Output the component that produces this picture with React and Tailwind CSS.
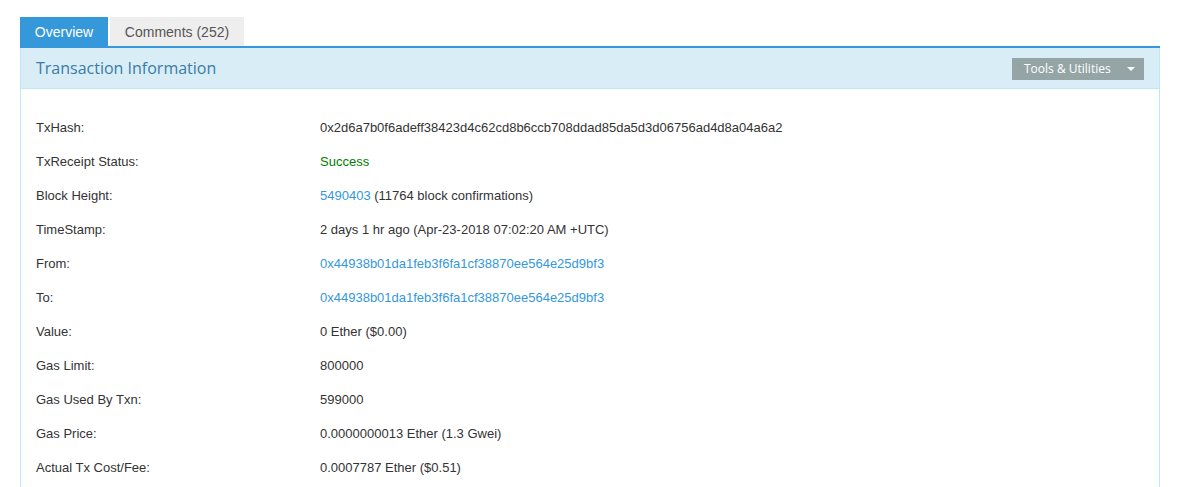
const rows = [
  { label: "TxHash:", value: "0x2d6a7b0f6adeff38423d4c62cd8b6ccb708ddad85da5d3d06756ad4d8a04a6a2" },
  { label: "TxReceipt Status:", value: <span className="text-[#008000]">Success</span> },
  {
    label: "Block Height:",
    value: (
      <>
        <span className="text-[#3498db]">5490403</span> (11764 block confirmations)
      </>
    ),
  },
  { label: "TimeStamp:", value: "2 days 1 hr ago (Apr-23-2018 07:02:20 AM +UTC)" },
  { label: "From:", value: <span className="text-[#3498db]">0x44938b01da1feb3f6fa1cf38870ee564e25d9bf3</span> },
  { label: "To:", value: <span className="text-[#3498db]">0x44938b01da1feb3f6fa1cf38870ee564e25d9bf3</span> },
  { label: "Value:", value: "0 Ether ($0.00)" },
  { label: "Gas Limit:", value: "800000" },
  { label: "Gas Used By Txn:", value: "599000" },
  { label: "Gas Price:", value: "0.0000000013 Ether (1.3 Gwei)" },
  { label: "Actual Tx Cost/Fee:", value: "0.0007787 Ether ($0.51)" },
]

const App = () => {
  return (
    <div className="min-h-[487px] bg-white pt-[17px] pl-5 pr-[17px] font-['Liberation_Sans',Arial,sans-serif] text-[13px] text-[#333]">
      {/** Tabs */}
      <div className="flex items-end gap-[2px]">
        <div className="flex h-[29px] w-[88px] items-center justify-center bg-[#3498db] pt-[2px] text-[14px] text-white">
          Overview
        </div>
        <div className="flex h-[29px] w-[134px] items-center justify-center bg-[#eeeeee] pt-[2px] text-[14px] text-[#555]">
          Comments (252)
        </div>
      </div>
      <div className="h-[2px] bg-[#3498db]" />

      {/** Panel */}
      <div className="border-x border-[#bce8f1]">
        <div className="flex h-[41px] items-center justify-between border-b border-[#bce8f1] bg-[#d9edf7] pl-[15px] pr-[15px]">
          <h3 className="font-['Open_Sans',sans-serif] text-[16px] text-[#3a7ca5]">Transaction Information</h3>
          <button className="mt-[2px] flex h-[22px] w-[132px] items-center justify-between bg-[#95a5a6] pl-3 pr-[9px] font-['Open_Sans',sans-serif] text-[12px] text-white">
            Tools &amp; Utilities
            <span className="h-0 w-0 border-x-[4px] border-t-[4px] border-x-transparent border-t-white" />
          </button>
        </div>

        <div className="pl-[15px] pr-[15px] pt-[22px] pb-2">
          {rows.map((row) => (
            <div key={row.label} className="flex h-[34px] items-center">
              <div className="w-[284px] shrink-0">{row.label}</div>
              <div>{row.value}</div>
            </div>
          ))}
        </div>
      </div>
    </div>
  )
}

export default App
